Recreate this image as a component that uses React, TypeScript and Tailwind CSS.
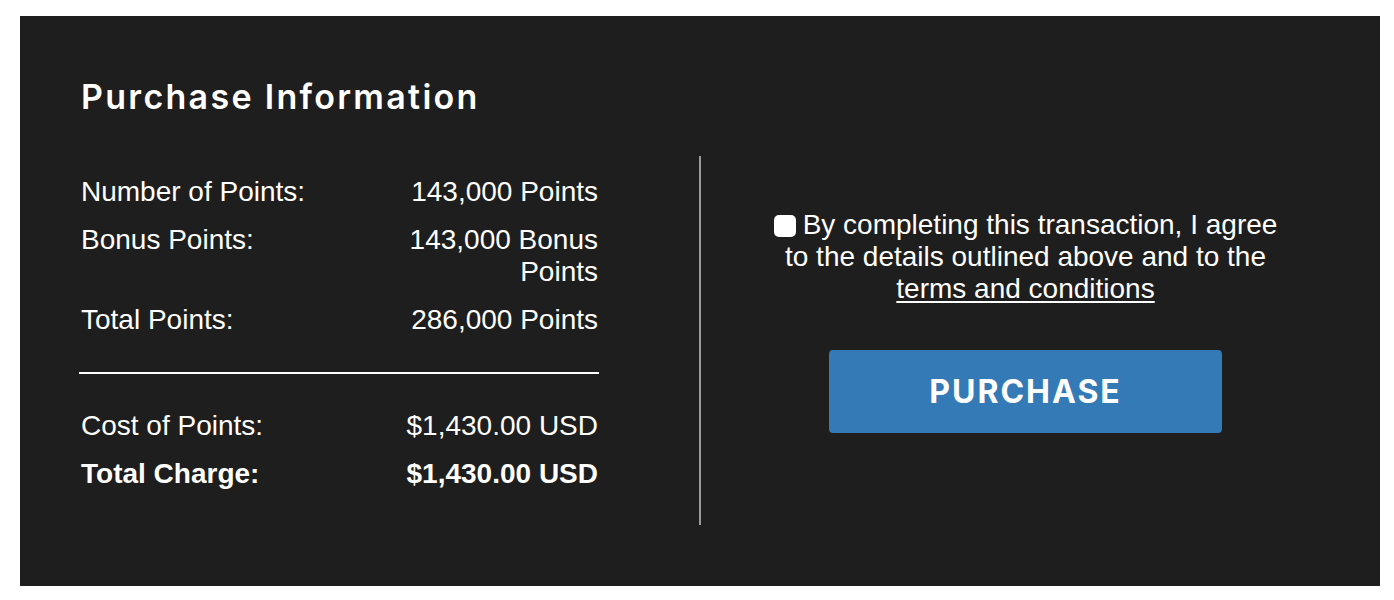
import React from "react";

const rows = [
  { label: "Number of Points:", value: "143,000 Points" },
  { label: "Bonus Points:", value: "143,000 Bonus Points" },
  { label: "Total Points:", value: "286,000 Points" },
];

export default function App() {
  return (
    <div className="min-h-screen bg-white pt-[16px] px-[20px] pr-[14px]">
      <div className="bg-[#1e1e1e] text-white pt-[62px] pb-[61px] pl-[61px] pr-[30px] font-['Liberation_Sans',Arial,sans-serif]">
        <h1 className="font-['Inter',sans-serif] font-semibold text-[34px] leading-[38px] tracking-[2.3px]">
          Purchase Information
        </h1>

        <div className="flex mt-[40px] h-[369px]">
          {/* Summary column */}
          <div className="w-[517px] pt-[20px] text-[28px] leading-[32px]">
            <div className="flex flex-col gap-[16px]">
              {rows.map((r) => (
                <div key={r.label} className="flex justify-between">
                  <span>{r.label}</span>
                  <span className="w-[200px] text-right">{r.value}</span>
                </div>
              ))}
            </div>
            <div className="h-[2px] bg-white mt-[36px] mb-[36px] -ml-[2px] -mr-[1px]" />
            <div className="flex flex-col gap-[16px]">
              <div className="flex justify-between">
                <span>Cost of Points:</span>
                <span>$1,430.00 USD</span>
              </div>
              <div className="flex justify-between font-bold">
                <span>Total Charge:</span>
                <span>$1,430.00 USD</span>
              </div>
            </div>
          </div>

          <div className="ml-[101px] w-[2px] bg-[#9a9a9a]" />

          {/* Agreement column */}
          <div className="flex-1 flex flex-col items-center pt-[53px]">
            <label className="block w-[520px] text-center text-[28px] leading-[32px]">
              <span className="inline-block w-[22px] h-[22px] bg-white rounded-[5px] align-[-3px] mr-[7px]" />
              By completing this transaction, I agree to the details outlined above and to the{" "}
              <a href="#" className="underline underline-offset-[3px]">terms and conditions</a>
            </label>
            <button className="mt-[45px] w-[393px] h-[83px] bg-[#337ab7] rounded-[4px] font-['Inter',sans-serif] font-bold text-[32px] tracking-[2px] text-white">
              PURCHASE
            </button>
          </div>
        </div>
      </div>
    </div>
  );
}
